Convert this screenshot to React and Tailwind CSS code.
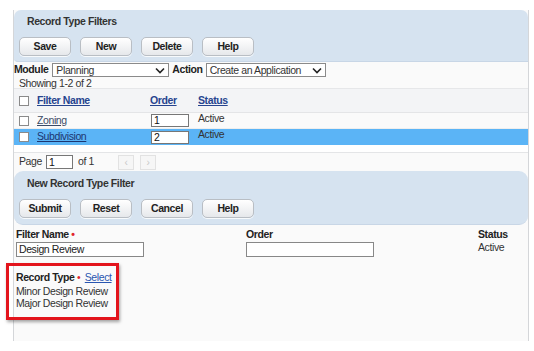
import React from "react";

const FONT = { fontFamily: '"Liberation Sans", Arial, sans-serif' };

function Btn({ children }) {
  return (
    <button className="w-[52px] h-[19px] rounded-[5px] border border-[#b9bec4] bg-gradient-to-b from-white to-[#e6e8eb] text-[10.5px] font-bold text-[#222] leading-none tracking-[-0.4px] shadow-[0_1px_0_rgba(255,255,255,0.8)]">
      {children}
    </button>
  );
}

function Check() {
  return <span className="block w-[10px] h-[10px] border border-[#8a8a8a] bg-white" />;
}

function Select({ value, w }) {
  return (
    <div className={`h-[14px] border border-[#8a8a8a] bg-white flex items-center justify-between pl-[3px] pr-[3px] ${w}`}>
      <span className="leading-none">{value}</span>
      <svg width="10" height="7" viewBox="0 0 10 7" className="mt-[1px] shrink-0">
        <path d="M1 1.5 L5 5.5 L9 1.5" fill="none" stroke="#222" strokeWidth="1.6" />
      </svg>
    </div>
  );
}

export default function App() {
  return (
    <div className="w-[534px] h-[351px] bg-white pt-[10px] text-[#333] text-[10.5px] tracking-[-0.4px] whitespace-nowrap overflow-hidden" style={FONT}>
      <div className="ml-[13px] w-[516px] h-[331px] border-l border-r border-[#d4d6d9] bg-[#fafafa]">
        {/* 상단 패널 */}
        <div className="h-[52px] bg-[#d6e3f0] rounded-t-[7px] rounded-bl-[4px] pl-[5px] pt-[5px] border-b border-[#c8d6e6]">
          <div className="pl-[8px] font-bold text-[#333] leading-[13px]">Record Type Filters</div>
          <div className="flex gap-[9px] mt-[9px]">
            <Btn>Save</Btn>
            <Btn>New</Btn>
            <Btn>Delete</Btn>
            <Btn>Help</Btn>
          </div>
        </div>

        {/* Module / Action */}
        <div className="h-[16px] flex items-center bg-[#fafafa]">
          <span className="font-bold text-[#222] mr-[4px]">Module</span>
          <Select value="Planning" w="w-[117px]" />
          <span className="font-bold text-[#222] ml-[3px] mr-[3px]">Action</span>
          <Select value="Create an Application" w="w-[120px]" />
        </div>
        <div className="h-[11px] pl-[5px] flex items-center border-b border-[#e6e7e9] leading-none">Showing 1-2 of 2</div>

        {/* 목록 헤더 */}
        <div className="h-[24px] flex items-center bg-[#f3f4f6] border-b border-[#e4e5e7] pl-[5px]">
          <Check />
          <span className="ml-[8px] w-[113px] font-bold underline text-[#26448f]">Filter Name</span>
          <span className="w-[48px] font-bold underline text-[#26448f]">Order</span>
          <span className="font-bold underline text-[#26448f]">Status</span>
        </div>
        <div className="h-[16px] flex items-center pl-[5px] border-b border-[#eeeeee]">
          <Check />
          <span className="ml-[8px] w-[114px] underline text-[#3b4a66]">Zoning</span>
          <div className="w-[38px] h-[13px] border border-[#777] bg-white pl-[2px] leading-[11px] text-[#111]">1</div>
          <span className="ml-[9px] -mt-[4px]">Active</span>
        </div>
        <div className="h-[16px] flex items-center pl-[5px] bg-[#5bb4f6]">
          <Check />
          <span className="ml-[8px] w-[114px] underline text-[#1d3570]">Subdivision</span>
          <div className="w-[38px] h-[13px] border border-[#777] bg-white pl-[2px] leading-[11px] text-[#111]">2</div>
          <span className="ml-[9px] -mt-[4px] text-[#333]">Active</span>
        </div>
        <div className="h-[8px] border-b border-[#e4e5e7] bg-white" />

        {/* 페이지 */}
        <div className="h-[18px] flex items-center pl-[5px]">
          <span>Page</span>
          <div className="ml-[4px] w-[27px] h-[14px] border border-[#777] bg-white pl-[2px] leading-[12px] text-[#111]">1</div>
          <span className="ml-[5px]">of 1</span>
          <div className="ml-[24px] flex gap-[6px]">
            <span className="w-[16px] h-[15px] border border-[#e2e2e2] bg-[#f6f6f6] text-[#c8c8c8] flex items-center justify-center text-[10px]">&lsaquo;</span>
            <span className="w-[16px] h-[15px] border border-[#e2e2e2] bg-[#f6f6f6] text-[#c8c8c8] flex items-center justify-center text-[10px]">&rsaquo;</span>
          </div>
        </div>

        {/* 새 필터 패널 */}
        <div className="h-[54px] bg-[#d6e3f0] rounded-[9px] pl-[5px] pt-[6px] border-b border-[#c8d6e6]">
          <div className="pl-[8px] font-bold text-[#333] leading-[13px]">New Record Type Filter</div>
          <div className="flex gap-[9px] mt-[9px]">
            <Btn>Submit</Btn>
            <Btn>Reset</Btn>
            <Btn>Cancel</Btn>
            <Btn>Help</Btn>
          </div>
        </div>

        {/* 입력 폼 */}
        <div className="flex pl-[2px] pt-[3px]">
          <div className="w-[230px]">
            <div className="font-bold text-[#222] leading-[13px]">
              Filter Name <span className="text-[#e0242b]">•</span>
            </div>
            <div className="mt-[1px] w-[128px] h-[15px] border border-[#888] bg-white pl-[2px] leading-[13px] text-[#222]">Design Review</div>
          </div>
          <div className="w-[232px]">
            <div className="font-bold text-[#222] leading-[13px]">Order</div>
            <div className="mt-[1px] w-[128px] h-[15px] border border-[#888] bg-white" />
          </div>
          <div>
            <div className="font-bold text-[#222] leading-[13px]">Status</div>
            <div className="leading-[12px]">Active</div>
          </div>
        </div>

        {/* Record Type (빨간 박스 강조) */}
        <div className="-ml-[8px] mt-[6px] w-[113px] h-[57px] border-[3px] border-[#e3141c] pl-[7px] pt-[5px] shadow-[1px_2px_3px_rgba(0,0,0,0.35)]">
          <div className="leading-[13px]">
            <span className="font-bold text-[#222]">Record Type</span>{" "}
            <span className="text-[#e0242b]">•</span>{" "}
            <span className="underline text-[#2a56b0] ml-[2px]">Select</span>
          </div>
          <div className="leading-[12px] mt-[1px]">Minor Design Review</div>
          <div className="leading-[12px]">Major Design Review</div>
        </div>
      </div>
    </div>
  );
}
